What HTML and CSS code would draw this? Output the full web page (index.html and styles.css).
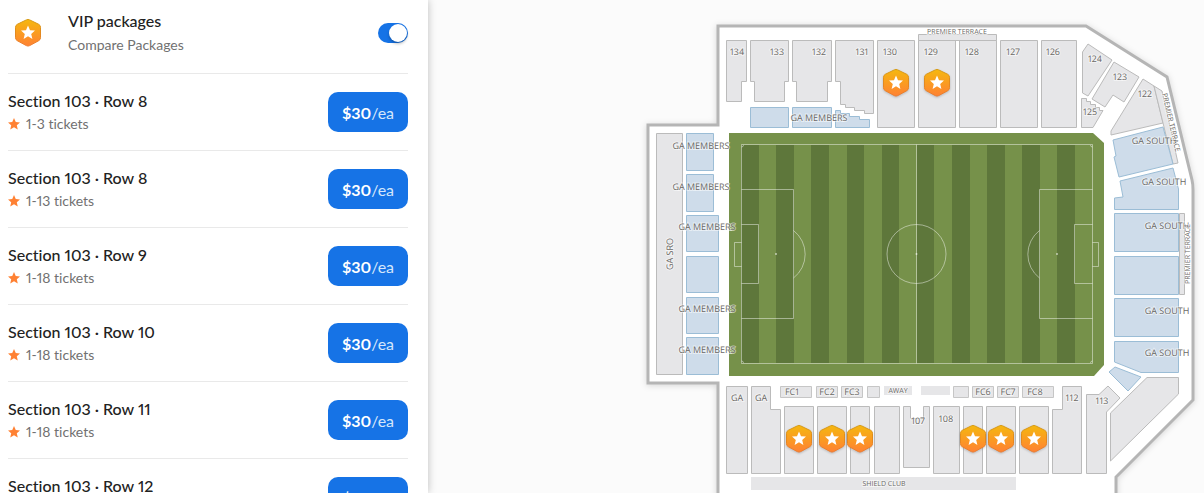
FILE: index.html
```
<!DOCTYPE html>
<html lang="en">
  <head>
    <meta charset="UTF-8" />
    <title>Tickets</title>
    <link rel="stylesheet" href="styles.css">
  </head>
  <body>
    <!-- shared shapes -->
    <svg class="defs" width="0" height="0" aria-hidden="true">
      <defs>
        <linearGradient id="vipFill" x1="0" y1="0" x2="0" y2="1">
          <stop offset="0" stop-color="#f5b80f" />
          <stop offset="1" stop-color="#ff8133" />
        </linearGradient>
        <linearGradient id="vipEdge" x1="0" y1="0" x2="0" y2="1">
          <stop offset="0" stop-color="#d79a12" />
          <stop offset="1" stop-color="#ee7a2c" />
        </linearGradient>
        <symbol id="star" viewBox="0 0 24 24">
          <path d="M12 0l3.500 8 8.500.8-6.400 5.700 1.900 8.500L12 18.600 4.500 23l1.900-8.500L0 8.800 8.500 8z" />
        </symbol>
        <symbol id="vip" viewBox="0 0 28 30">
          <path fill="url(#vipFill)" stroke="url(#vipEdge)" d="M12.300 1.900Q14 1 15.700 1.900L24.700 6.300Q26.500 7.300 26.500 9.300V19.700Q26.500 21.700 24.700 22.700L15.700 27.600Q14 28.500 12.300 27.600L3.300 22.700Q1.500 21.700 1.500 19.700V9.300Q1.500 7.300 3.300 6.300Z" />
          <path fill="#fff" d="M14 7.500l2 4.700 5 .4-3.800 3.300 1.200 5L14 18.300l-4.400 2.600 1.200-5L7 12.600l5-.4z" />
        </symbol>
      </defs>
    </svg>

    <main class="page">
      <aside class="sidebar">
        <div class="vip">
          <svg class="vip-icon"><use href="#vip" /></svg>
          <div class="vip-text">
            <label class="title" for="vipToggle">VIP packages</label>
            <div class="sub">Compare Packages</div>
          </div>
          <input class="toggle" type="checkbox" id="vipToggle" checked />
        </div>

        <ul class="listings">
          <li class="listing">
            <div>
              <div class="title">Section 103 · Row 8</div>
              <div class="sub"><svg class="star"><use href="#star" /></svg>1-3 tickets</div>
            </div>
            <button class="price" type="button"><b>$30</b>/ea</button>
          </li>
          <li class="listing">
            <div>
              <div class="title">Section 103 · Row 8</div>
              <div class="sub"><svg class="star"><use href="#star" /></svg>1-13 tickets</div>
            </div>
            <button class="price" type="button"><b>$30</b>/ea</button>
          </li>
          <li class="listing">
            <div>
              <div class="title">Section 103 · Row 9</div>
              <div class="sub"><svg class="star"><use href="#star" /></svg>1-18 tickets</div>
            </div>
            <button class="price" type="button"><b>$30</b>/ea</button>
          </li>
          <li class="listing">
            <div>
              <div class="title">Section 103 · Row 10</div>
              <div class="sub"><svg class="star"><use href="#star" /></svg>1-18 tickets</div>
            </div>
            <button class="price" type="button"><b>$30</b>/ea</button>
          </li>
          <li class="listing">
            <div>
              <div class="title">Section 103 · Row 11</div>
              <div class="sub"><svg class="star"><use href="#star" /></svg>1-18 tickets</div>
            </div>
            <button class="price" type="button"><b>$30</b>/ea</button>
          </li>
          <li class="listing">
            <div>
              <div class="title">Section 103 · Row 12</div>
              <div class="sub"><svg class="star"><use href="#star" /></svg>1-18 tickets</div>
            </div>
            <button class="price" type="button"><b>$30</b>/ea</button>
          </li>
        </ul>
      </aside>

      <section class="map">
        <svg class="stadium" viewBox="428 0 776 493" role="img" aria-label="Stadium map">
          <path class="outline" d="M718 520V383H648V125H718V26H1086L1167 77L1192 180Q1193 184 1193 190V400L1116 477V520Z" />

          <!-- pitch -->
          <path class="grass" d="M729 133H1093L1104 143V365L1094 376H729Z" />
          <path class="stripes" d="M741 145h18v218h-18zM776 145h18v218h-18zM811 145h18v218h-18zM847 145h17v218h-17zM882 145h17v218h-17zM917 145h17v218h-17zM952 145h18v218h-18zM987 145h18v218h-18zM1022 145h18v218h-18zM1057 145h18v218h-18z" />
          <g class="lines">
            <path d="M741.500 144.500H1092.500V363.500H741.500ZM916.500 144.500V363.500" />
            <path d="M741.500 189.500H793.500V318.500H741.500M741.500 224.500H758.500V283.500H741.500M741.500 242.500H734.500V266.500H741.500" />
            <path d="M1092.500 189.500H1039.500V318.500H1092.500M1092.500 224.500H1074.500V283.500H1092.500M1092.500 242.500H1098.500V266.500H1092.500" />
            <path d="M793.500 230.500A30 30 0 0 1 793.500 278M1039.500 230.500A30 30 0 0 0 1039.500 278" />
            <path d="M741.500 147a2 2 0 0 0 2-2M741.500 361a2 2 0 0 1 2 2M1092.500 147a2 2 0 0 1-2-2M1092.500 361a2 2 0 0 0-2 2" />
            <circle cx="916.500" cy="254" r="29.500" />
          </g>
          <g class="spots">
            <circle cx="776" cy="254" r="1" />
            <circle cx="916.500" cy="254" r="1" />
            <circle cx="1057" cy="254" r="1" />
          </g>

          <!-- seats -->
          <g class="seats">
            <path d="M726.500 40.500H746.500V81.500H741.500V101.500H726.500Z" />
            <path d="M750.500 40.500H788.500V81.500H784.500V101.500H754.500V81.500H750.500Z" />
            <path d="M792.500 40.500H831.500V81.500H827.500V101.500H796.500V81.500H792.500Z" />
            <path d="M835.500 40.500H873.500V113.500H864.500V110.500H854.500V107.500H845.500V104.500H840.500V81.500H835.500Z" />
            <path d="M877.500 40.500H914.500V127.500H877.500Z" />
            <path d="M918.500 40.500H955.500V127.500H918.500Z" />
            <path d="M959.500 40.500H996.500V127.500H959.500Z" />
            <path d="M918.500 34.500H996.500V40.500H918.500Z" />
            <path d="M1000.500 40.500H1037.500V127.500H1000.500Z" />
            <path d="M1041.500 40.500H1076.500V127.500H1041.500Z" />
            <path d="M1088 44L1112 60L1088 96L1082.500 93V52Z" />
            <path d="M1114 62L1139 77L1124 102L1113 95L1105 107L1092 99Z" />
            <path d="M1081.500 98.500H1086.500V101.500H1090.500V104.500H1095.500V107.500H1099.500V110.500H1103L1093 127.500H1081.500Z" />
            <path d="M1143 79L1154 86L1163 123L1111 135V131Z" />
            <path d="M1154 86L1162 91L1178 163L1173 164Z" />
            <path d="M1179.500 213.500H1184.500V294.500H1179.500Z" />
            <path d="M656.500 133.500H682.500V374.500H656.500Z" />

            <path d="M726.500 386.500H747.500V473.500H726.500Z" />
            <path d="M751.500 386.500H770.500V409.500H780.500V473.500H751.500Z" />
            <path d="M784.500 406.500H813.500V473.500H784.500Z" />
            <path d="M817.500 406.500H846.500V473.500H817.500Z" />
            <path d="M850.500 406.500H869.500V473.500H850.500Z" />
            <path d="M874.500 406.500H899.500V473.500H874.500Z" />
            <path d="M903.500 406.500H910.500V418.500H923.500V406.500H929.500V467.500H903.500Z" />
            <path d="M933.500 406.500H959.500V473.500H933.500Z" />
            <path d="M963.500 406.500H982.500V473.500H963.500Z" />
            <path d="M986.500 406.500H1015.500V473.500H986.500Z" />
            <path d="M1019.500 406.500H1048.500V473.500H1019.500Z" />
            <path d="M1062.500 386.500H1081.500V473.500H1052.500V409.500H1062.500Z" />
            <path d="M1086.500 394.500H1099L1108 386L1120 398L1106.500 412V473.500H1086.500Z" />
            <path d="M1147 377.500H1178.500V394L1110.500 461V413Z" />
          </g>
          <g class="seats boxes">
            <path d="M780.500 386.500H811.500V397.500H780.500Z" />
            <path d="M816.500 386.500H837.500V397.500H816.500Z" />
            <path d="M841.500 386.500H862.500V397.500H841.500Z" />
            <path d="M867.500 386.500H879.500V397.500H867.500Z" />
            <path d="M953.500 386.500H968.500V397.500H953.500Z" />
            <path d="M972.500 386.500H993.500V397.500H972.500Z" />
            <path d="M997.500 386.500H1018.500V397.500H997.500Z" />
            <path d="M1022.500 386.500H1053.500V397.500H1022.500Z" />
          </g>
          <path class="plain" d="M884 386H912V395H884ZM921 386H950V395H921ZM751 477H1016V490H751Z" />

          <!-- general admission -->
          <g class="seats ga">
            <path d="M750.500 107.500H788.500V127.500H750.500Z" />
            <path d="M792.500 107.500H831.500V127.500H792.500Z" />
            <path d="M835.500 110.500H840.500V113.500H849.500V116.500H859.500V119.500H869.500V127.500H835.500Z" />
            <path d="M686.500 133.500H713.500V170.500H686.500Z" />
            <path d="M686.500 174.500H713.500V211.500H686.500Z" />
            <path d="M686.500 215.500H718.500V251.500H686.500Z" />
            <path d="M686.500 256.500H718.500V292.500H686.500Z" />
            <path d="M686.500 297.500H718.500V333.500H686.500Z" />
            <path d="M686.500 337.500H718.500V374.500H686.500Z" />
            <path d="M1113 140L1163 127L1173 164L1119 177L1114 157L1116 156Z" />
            <path d="M1120 181L1173 168L1178.500 189V209.500H1114.500V198L1123 197Z" />
            <path d="M1114.500 213.500H1178.500V251.500H1114.500Z" />
            <path d="M1114.500 256.500H1178.500V294.500H1114.500Z" />
            <path d="M1114.500 298.500H1178.500V336.500H1114.500Z" />
            <path d="M1114.500 341.500H1178.500V372.500H1141L1114.500 362Z" />
            <path d="M1115 367L1141 377L1128 391L1109 372Z" />
          </g>

          <g class="labels">
            <text x="737" y="55">134</text>
            <text x="777" y="55">133</text>
            <text x="819" y="55">132</text>
            <text x="862" y="55">131</text>
            <text x="890" y="55">130</text>
            <text x="931" y="55">129</text>
            <text x="972" y="55">128</text>
            <text x="1013" y="55">127</text>
            <text x="1053" y="55">126</text>
            <text x="1095" y="62">124</text>
            <text x="1120" y="80">123</text>
            <text x="1145" y="97">122</text>
            <text x="1090" y="115">125</text>
            <text x="819" y="121">GA MEMBERS</text>
            <text x="701" y="149">GA MEMBERS</text>
            <text x="701" y="190">GA MEMBERS</text>
            <text x="707" y="230">GA MEMBERS</text>
            <text x="707" y="312">GA MEMBERS</text>
            <text x="707" y="353">GA MEMBERS</text>
            <text x="1154" y="144">GA SOUTH</text>
            <text x="1164" y="185">GA SOUTH</text>
            <text x="1167" y="229">GA SOUTH</text>
            <text x="1167" y="314">GA SOUTH</text>
            <text x="1167" y="356">GA SOUTH</text>
            <text transform="translate(673 254) rotate(-90)">GA SRO</text>
            <text x="737" y="401">GA</text>
            <text x="761" y="401">GA</text>
            <text x="792" y="395">FC1</text>
            <text x="827" y="395">FC2</text>
            <text x="852" y="395">FC3</text>
            <text x="983" y="395">FC6</text>
            <text x="1008" y="395">FC7</text>
            <text x="1035" y="395">FC8</text>
            <text x="918" y="424">107</text>
            <text x="946" y="422">108</text>
            <text x="1072" y="401">112</text>
            <text x="1102" y="404">113</text>
          </g>
          <g class="labels small">
            <text x="957" y="34">PREMIER TERRACE</text>
            <text transform="translate(1169 123) rotate(77)">PREMIER TERRACE</text>
            <text transform="translate(1190 254) rotate(-90)">PREMIER TERRACE</text>
            <text x="898" y="393">AWAY</text>
            <text x="884" y="486">SHIELD CLUB</text>
          </g>

          <g class="pins">
            <use href="#vip" x="882" y="68" width="28" height="30" />
            <use href="#vip" x="923" y="68" width="28" height="30" />
            <use href="#vip" x="785" y="424" width="28" height="30" />
            <use href="#vip" x="818" y="424" width="28" height="30" />
            <use href="#vip" x="846" y="424" width="28" height="30" />
            <use href="#vip" x="959" y="424" width="28" height="30" />
            <use href="#vip" x="987" y="424" width="28" height="30" />
            <use href="#vip" x="1020" y="424" width="28" height="30" />
          </g>
        </svg>
      </section>
    </main>
  </body>
</html>
```
FILE: styles.css
```
* {
  box-sizing: border-box;
}
body {
  margin: 0;
  font-family: Lato, "Open Sans", sans-serif;
  font-size: 16px;
  font-variant-ligatures: none;
  font-variant-numeric: proportional-nums;
  color: #222;
  background: #fbfbfb;
}
.defs {
  position: absolute;
}
.page {
  display: flex;
  height: 100vh;
  overflow: hidden;
}

/* ticket list */
.sidebar {
  flex: 0 0 428px;
  padding: 0 20px 0 8px;
  overflow-y: auto;
  scrollbar-width: none;
  background: #fff;
  box-shadow: 0 0 8px rgba(0, 0, 0, 0.25);
  z-index: 1;
}
.vip {
  display: flex;
  align-items: center;
  padding: 9px 0 16px;
}
.vip-icon {
  width: 28px;
  height: 30px;
  margin: 0 26px 0 6px;
}
.vip-text {
  flex: 1;
}
.title {
  display: block;
  font-weight: 500;
  line-height: 24px;
}
.sub {
  display: flex;
  align-items: center;
  gap: 6px;
  font-size: 14px;
  line-height: 22px;
  color: #717171;
}
.vip .sub {
  line-height: 24px;
}
.star {
  width: 12px;
  height: 12px;
  fill: #ff8133;
}
.toggle {
  appearance: none;
  width: 30px;
  height: 20px;
  margin: 0;
  padding: 1px;
  border-radius: 10px;
  background: #ccc;
}
.toggle::before {
  content: "";
  display: block;
  width: 18px;
  height: 18px;
  border-radius: 50%;
  background: #fff;
  box-shadow: 0 2px 3px rgba(0, 0, 0, 0.25);
}
.toggle:checked {
  background: #1673e6;
}
.toggle:checked::before {
  margin-left: 10px;
}
.listings {
  list-style: none;
  margin: 0;
  padding: 0;
}
.listing {
  display: flex;
  align-items: center;
  justify-content: space-between;
  padding: 15px 0;
  border-top: 1px solid #e9e9e9;
}
.price {
  width: 80px;
  height: 40px;
  padding: 0;
  border: 0;
  border-radius: 10px;
  font: inherit;
  color: #d5e6fb;
  background: #1673e6;
}
.price b {
  color: #fff;
}

/* seat map */
.map {
  flex: 1;
  min-width: 0;
}
.stadium {
  display: block;
  width: 100%;
  height: 100%;
}
.outline {
  fill: #fff;
  stroke: #b5b5b5;
  stroke-width: 3;
  filter: drop-shadow(0 1px 3px rgba(0, 0, 0, 0.15));
}
.grass {
  fill: #76914a;
}
.stripes {
  fill: #5e773b;
}
.lines {
  fill: none;
  stroke: #fff;
  stroke-opacity: 0.45;
}
.spots {
  fill: #fff;
  fill-opacity: 0.6;
}
.seats {
  fill: #e6e6e8;
  stroke: #bbb;
}
.boxes {
  stroke: #c6c6c6;
}
.ga {
  fill: #cedcea;
  stroke: #9bbdd6;
}
.plain {
  fill: #e6e6e8;
}
.labels {
  font-family: "Open Sans", "Noto Sans", sans-serif;
  font-size: 9px;
  text-anchor: middle;
  text-rendering: geometricPrecision;
  fill: #6b6966;
  stroke: #fff;
  stroke-opacity: 0.5;
  stroke-width: 2;
  paint-order: stroke;
}
.small {
  font-size: 7px;
}
.pins {
  filter: drop-shadow(0 1px 1px rgba(0, 0, 0, 0.2));
}
```
